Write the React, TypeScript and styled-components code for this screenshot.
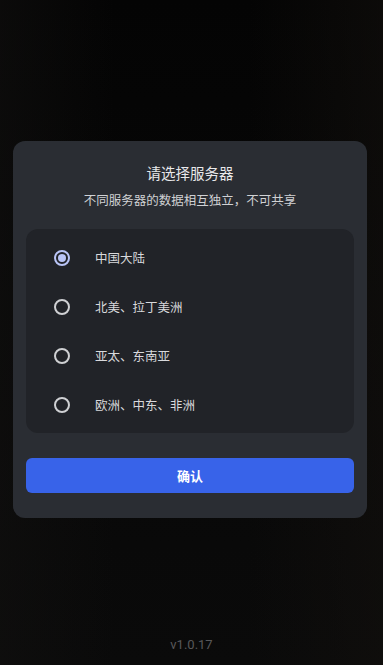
import React from "react";
import styled, { createGlobalStyle } from "styled-components";

const GlobalStyle = createGlobalStyle`
    html, body {
        margin: 0;
        padding: 0;
        background: #070707;
    }
    * {
        box-sizing: border-box;
    }
`;

const regions = ["中国大陆", "北美、拉丁美洲", "亚太、东南亚", "欧洲、中东、非洲"];

const Page = styled.div`
    display: flex;
    flex-direction: column;
    height: 665px;
    overflow: hidden;
    font-family: "Noto Sans CJK SC", "Noto Sans", sans-serif;
    background:
        linear-gradient(90deg, rgba(18, 17, 16, 0.5) 0%, rgba(6, 6, 6, 0) 30%, rgba(6, 6, 6, 0) 65%, rgba(20, 17, 14, 0.5) 100%),
        linear-gradient(180deg, #040404 0%, #070707 45%, #0a0a0a 100%);
`;

const Card = styled.div`
    display: flex;
    flex-direction: column;
    width: 354px;
    margin: 141px 0 0 13px;
    padding: 21px 13px 25px;
    background: #2a2d33;
    border-radius: 12px;
`;

const Title = styled.h2`
    margin: 0;
    font-size: 14.5px;
    line-height: 22px;
    font-weight: 400;
    text-align: center;
    color: #e8e8ea;
`;

const Subtitle = styled.p`
    margin: 6px 0 0;
    font-size: 12.5px;
    line-height: 20px;
    text-align: center;
    color: #d0d1d4;
`;

const List = styled.div`
    display: flex;
    flex-direction: column;
    margin-top: 19px;
    padding: 4px 0;
    background: #212328;
    border-radius: 12px;
`;

const Option = styled.label`
    display: flex;
    align-items: center;
    gap: 25px;
    height: 49px;
    padding-left: 28px;
    font-size: 12.5px;
    color: #d8d9dc;
    cursor: pointer;
`;

const Radio = styled.span<{ $checked: boolean }>`
    display: flex;
    align-items: center;
    justify-content: center;
    width: 16px;
    height: 16px;
    border-radius: 50%;
    border: 2px solid ${(p) => (p.$checked ? "#b9c4f6" : "#cfd0d3")};

    &::after {
        content: "";
        display: ${(p) => (p.$checked ? "block" : "none")};
        width: 8px;
        height: 8px;
        border-radius: 50%;
        background: #b9c4f6;
    }
`;

const ConfirmButton = styled.button`
    margin-top: 25px;
    height: 35px;
    border: none;
    border-radius: 6px;
    background: #3863e9;
    color: #ffffff;
    font-family: inherit;
    font-size: 13px;
    font-weight: 700;
    cursor: pointer;
`;

const Version = styled.div`
    margin-top: auto;
    padding-bottom: 11px;
    font-family: Roboto, "Noto Sans", sans-serif;
    font-size: 13px;
    line-height: 18px;
    text-align: center;
    color: #58585a;
`;

export default function App() {
    const [selected, setSelected] = React.useState(0);

    return (
        <>
            <GlobalStyle />
            <Page>
                <Card>
                    <Title>请选择服务器</Title>
                    <Subtitle>不同服务器的数据相互独立，不可共享</Subtitle>
                    <List>
                        {regions.map((name, i) => (
                            <Option key={name} onClick={() => setSelected(i)}>
                                <Radio $checked={selected === i} />
                                {name}
                            </Option>
                        ))}
                    </List>
                    <ConfirmButton>确认</ConfirmButton>
                </Card>
                <Version>v1.0.17</Version>
            </Page>
        </>
    );
}
